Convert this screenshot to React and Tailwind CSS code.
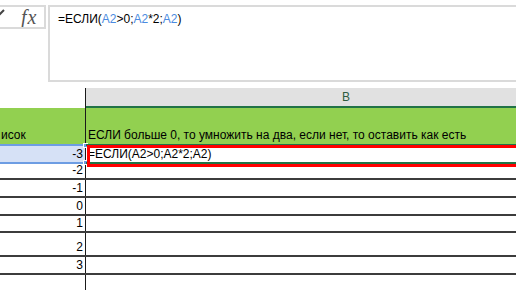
const font = { fontFamily: '"Liberation Sans", Arial, sans-serif' }

const rows = [
  { a: '-2', h: 'h-[16px]' },
  { a: '-1', h: 'h-[18px]' },
  { a: '0', h: 'h-[18px]' },
  { a: '1', h: 'h-[17px]' },
  { a: '2', h: 'h-[24px]' },
  { a: '3', h: 'h-[18px]' },
  { a: '', h: 'h-[20px]' },
]

function Ref({ children }) {
  return <span className="text-[#4b8be0]">{children}</span>
}

export default function App() {
  return (
    <div
      className="w-[516px] h-[290px] overflow-hidden bg-white text-[12px] leading-[14px] text-black"
      style={font}
    >
      {/* Строка формул */}
      <div className="h-[88px] flex items-start pt-[5px]">
        <div className="w-[46px] h-[24px] shrink-0 flex items-center border-y-2 border-r-2 border-[#dadada] overflow-hidden">
          <svg width="14" height="10" viewBox="0 0 14 10" className="-ml-[9px] -mt-[6px] shrink-0">
            <path d="M1 5 L5 9 L13 1" fill="none" stroke="#444" strokeWidth="2" />
          </svg>
          <span
            className="ml-[16px] text-[20px] italic text-[#555] leading-none tracking-[1px]"
            style={{ fontFamily: '"Liberation Serif", "Times New Roman", serif' }}
          >
            fx
          </span>
        </div>
        <div className="ml-[2px] flex-1 h-[77px] border-y-2 border-l-2 border-[#dadada] pl-[8px] pt-[5px]">
          =ЕСЛИ(<Ref>A2</Ref>&gt;0;<Ref>A2</Ref>*2;<Ref>A2</Ref>)
        </div>
      </div>

      {/* Заголовок столбцов */}
      <div className="flex h-[20px]">
        <div className="w-[86px] shrink-0 border-r border-[#1a1a1a]" />
        <div className="w-[520px] shrink-0 bg-[#e1e1e1] border-b-2 border-[#217346] flex items-center justify-center text-[#2e5d3f]">
          B
        </div>
      </div>

      {/* Строка 1 */}
      <div className="flex h-[36px] bg-[#92d050]">
        <div className="w-[86px] shrink-0 border-r border-[#1a1a1a] flex items-end pb-[2px] pl-[1px] overflow-hidden">
          исок
        </div>
        <div className="w-[520px] shrink-0 flex items-end pl-[2px] pb-[2px] whitespace-nowrap">
          ЕСЛИ больше 0, то умножить на два, если нет, то оставить как есть
        </div>
      </div>

      {/* Строка 2 */}
      <div className="flex h-[20px]">
        <div className="relative w-[86px] shrink-0 bg-[#d6e1f6] border-y-2 border-[#6d9de3] border-r border-r-[#1a1a1a] flex items-center justify-end pr-[2px]">
          -3
          <span className="absolute -top-[3px] -right-[3px] w-[5px] h-[5px] bg-[#6d9de3] border border-white" />
          <span className="absolute -bottom-[3px] -right-[3px] w-[5px] h-[5px] bg-[#6d9de3] border border-white" />
        </div>
        <div className="relative w-[520px] shrink-0 border-y-2 border-[#217346] flex items-center pl-[2px]">
          =ЕСЛИ(A2&gt;0;A2*2;A2)
          <span className="absolute -top-[1px] left-[1px] -right-[10px] -bottom-[5px] border-[3px] border-[#ff0000]" />
        </div>
      </div>

      {/* Остальные строки */}
      {rows.map((r, i) => (
        <div key={i} className={`flex ${r.h} border-b-2 border-[#3c3c3c]`}>
          <div className="w-[86px] shrink-0 border-r border-[#1a1a1a] flex items-end justify-end pr-[2px] pb-[1px]">
            {r.a}
          </div>
          <div className="w-[520px] shrink-0" />
        </div>
      ))}
    </div>
  )
}
